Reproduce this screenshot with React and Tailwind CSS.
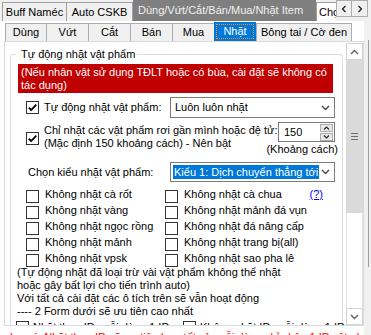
import React from 'react';

const Check = ({ checked }) => (
  <span className="w-[13px] h-[13px] shrink-0 border border-[#333333] bg-white flex items-center justify-center">
    {checked && (
      <svg width="11" height="11" viewBox="0 0 11 11">
        <path d="M1.8 5.6 L4.2 8 L9.3 2.6" stroke="#000" strokeWidth="1.8" fill="none" />
      </svg>
    )}
  </span>
);

const ChevronDown = ({ color = '#555' }) => (
  <svg width="9" height="6" viewBox="0 0 9 6">
    <path d="M1 1 L4.5 4.5 L8 1" stroke={color} strokeWidth="1.4" fill="none" />
  </svg>
);

const ChevronUp = ({ color = '#555' }) => (
  <svg width="9" height="6" viewBox="0 0 9 6">
    <path d="M1 5 L4.5 1.5 L8 5" stroke={color} strokeWidth="1.4" fill="none" />
  </svg>
);

const Item = ({ label }) => (
  <div className="flex items-start gap-[6px]">
    <span className="mt-[2px]">
      <Check />
    </span>
    <span className="whitespace-nowrap">{label}</span>
  </div>
);

const rows = [
  ['Không nhặt cà rốt', 'Không nhặt cà chua'],
  ['Không nhặt vàng', 'Không nhặt mảnh đá vụn'],
  ['Không nhặt ngọc rồng', 'Không nhặt đá nâng cấp'],
  ['Không nhặt mảnh', 'Không nhặt trang bị(all)'],
  ['Không nhặt vpsk', 'Không nhặt sao pha lê'],
];

function TopTabs() {
  return (
    <div className="h-[21px] bg-[#f0f0f0] flex items-end shrink-0">
      <div className="ml-[2px] w-[65px] h-[19px] border border-b-0 border-[#a0a0a0] flex items-center justify-center whitespace-nowrap">
        Buff Naméc
      </div>
      <div className="w-[66px] h-[19px] border border-l-0 border-b-0 border-[#a0a0a0] flex items-center justify-center whitespace-nowrap">
        Auto CSKB
      </div>
      <div className="w-[183px] h-[21px] bg-[#7f7f7f] text-[#f0f0f0] flex items-center pl-[5px] whitespace-nowrap overflow-hidden">
        Dùng/Vứt/Cắt/Bán/Mua/Nhặt Item
      </div>
      <div className="w-[20px] h-[19px] border border-r-0 border-b-0 border-[#a0a0a0] bg-white overflow-hidden flex items-center pl-[2px] whitespace-nowrap">
        Chọn
      </div>
      <div className="self-start flex">
        <div className="w-[16px] h-[17px] border border-[#adadad] bg-[#f0f0f0] flex items-center justify-center">
          <svg width="6" height="8" viewBox="0 0 6 8">
            <path d="M4.5 1 L1.5 4 L4.5 7" stroke="#222" strokeWidth="1.3" fill="none" />
          </svg>
        </div>
        <div className="w-[16px] h-[17px] border border-l-0 border-[#adadad] bg-[#f0f0f0] flex items-center justify-center">
          <svg width="6" height="8" viewBox="0 0 6 8">
            <path d="M1.5 1 L4.5 4 L1.5 7" stroke="#222" strokeWidth="1.3" fill="none" />
          </svg>
        </div>
      </div>
    </div>
  );
}

function InnerTabs() {
  const tab = 'h-[18px] border border-b-0 border-r-0 border-[#adadad] bg-[#f0f0f0] flex items-center justify-center whitespace-nowrap';
  return (
    <div className="h-[20px] flex items-end pl-[5px] shrink-0">
      <div className={`${tab} w-[41px]`}>Dùng</div>
      <div className={`${tab} w-[42px]`}>Vứt</div>
      <div className={`${tab} w-[42px]`}>Cắt</div>
      <div className={`${tab} w-[42px]`}>Bán</div>
      <div className={`${tab} w-[42px]`}>Mua</div>
      <div className="w-[42px] h-[19px] bg-[#0078d7] p-[2px]">
        <div className="h-full border border-dotted border-[#ff8728] text-white flex items-center justify-center">
          Nhặt
        </div>
      </div>
      <div className="w-[96px] h-[18px] border border-b-0 border-[#adadad] bg-[#f0f0f0] flex items-center justify-center whitespace-nowrap">
        Bông tai / Cờ đen
      </div>
    </div>
  );
}

function ScrollBar() {
  return (
    <div className="w-[17px] flex flex-col pt-[1px]">
      <div className="h-[17px] border border-[#d4d4d4] bg-white flex items-center justify-center">
        <ChevronUp color="#606060" />
      </div>
      <div className="h-[153px] bg-[#dadada] flex flex-col items-center justify-center gap-[2px]">
        <span className="w-[7px] h-px bg-[#707070]" />
        <span className="w-[7px] h-px bg-[#707070]" />
        <span className="w-[7px] h-px bg-[#707070]" />
      </div>
      <div className="flex-1 bg-white border-x border-[#e3e3e3]" />
      <div className="h-[17px] border border-[#d4d4d4] bg-white flex items-center justify-center">
        <ChevronDown color="#606060" />
      </div>
    </div>
  );
}

function Page() {
  return (
    <div className="ml-[4px] w-[360px] h-[285px] border border-[#dadada] bg-white flex shrink-0">
      <div className="w-[341px] overflow-hidden pl-[5px] pt-[6px]">
        <fieldset className="w-[333px] min-w-0 border border-[#dcdcdc] rounded-[3px] pb-[10px]">
          <legend className="ml-[5px] pl-[5px] pr-[2px]">Tự động nhặt vật phẩm</legend>

          <div className="mt-[3px] ml-[7px] w-[315px] h-[29px] bg-[#c00000] text-white pl-[3px] pt-[2px] whitespace-nowrap overflow-hidden">
            (Nếu nhân vật sử dụng TĐLT hoặc có bùa, cài đặt sẽ không có
            <br />
            tác dụng)
          </div>

          <div className="mt-[4px] h-[21px] flex items-center justify-between pr-[7px]">
            <div className="ml-[15px] flex items-center gap-[5px]">
              <Check checked />
              <span className="-mt-[1px] whitespace-nowrap">Tự động nhặt vật phẩm:</span>
            </div>
            <div className="w-[165px] h-[21px] border border-[#7a7a7a] bg-white flex items-center justify-between pl-[4px] pr-[4px]">
              <span>Luôn luôn nhặt</span>
              <ChevronDown color="#444" />
            </div>
          </div>

          <div className="mt-[4px] h-[34px] flex pr-[7px]">
            <div className="ml-[15px] w-[252px] shrink-0 flex items-start gap-[5px]">
              <span className="mt-[10px]">
                <Check checked />
              </span>
              <span className="mt-[2px] whitespace-nowrap">
                Chỉ nhặt các vật phẩm rơi gần mình hoặc đệ tử:
                <br />
                (Mặc định 150 khoảng cách) - Nên bật
              </span>
            </div>
            <div className="ml-auto w-[57px] flex flex-col items-end">
              <div className="w-[57px] h-[20px] border border-[#7a7a7a] bg-white flex items-center justify-between pl-[5px] pr-[1px]">
                <span>150</span>
                <div className="flex flex-col gap-px">
                  <span className="w-[13px] h-[8px] border border-[#adadad] bg-[#e8e8e8] flex items-center justify-center">
                    <svg width="7" height="4" viewBox="0 0 7 4"><path d="M1 3.5 L3.5 1 L6 3.5" stroke="#222" strokeWidth="1.1" fill="none" /></svg>
                  </span>
                  <span className="w-[13px] h-[8px] border border-[#adadad] bg-[#e8e8e8] flex items-center justify-center">
                    <svg width="7" height="4" viewBox="0 0 7 4"><path d="M1 0.5 L3.5 3 L6 0.5" stroke="#222" strokeWidth="1.1" fill="none" /></svg>
                  </span>
                </div>
              </div>
              <div className="mt-[1px] -mr-[3px] w-[80px] text-right whitespace-nowrap">(Khoảng cách)</div>
            </div>
          </div>

          <div className="mt-[6px] h-[20px] flex items-center justify-between pr-[7px]">
            <span className="ml-[17px] whitespace-nowrap">Chọn kiểu nhặt vật phẩm:</span>
            <div className="w-[165px] h-[20px] border border-[#7a7a7a] bg-white flex items-center justify-between pl-[2px] pr-[4px]">
              <span className="h-[14px] bg-[#0078d7] text-white px-[1px] flex items-center whitespace-nowrap">
                Kiểu 1: Dịch chuyển thẳng tới
              </span>
              <ChevronDown color="#444" />
            </div>
          </div>

          <div className="mt-[6px] flex flex-col">
            {rows.map(([a, b], i) => (
              <div key={i} className="h-[16px] flex items-start">
                <div className="ml-[15px] w-[139px] shrink-0">
                  <Item label={a} />
                </div>
                <Item label={b} />
                {i === 0 && (
                  <span className="ml-auto mr-[19px] text-[#0000ff] underline">(?)</span>
                )}
              </div>
            ))}
          </div>

          <p className="ml-[6px] -mt-[2px] whitespace-nowrap">
            (Tự động nhặt đã loại trừ vài vật phẩm không thể nhặt
            <br />
            hoặc gây bất lợi cho tiến trình auto)
            <br />
            Với tất cả cài đặt các ô tích trên sẽ vẫn hoạt động
            <br />
            ---- 2 Form dưới sẽ ưu tiên cao nhất
          </p>

          <div className="mt-[3px] flex items-start">
            <div className="ml-[5px] w-[167px] shrink-0 flex items-start gap-[4px]">
              <Check />
              <span className="whitespace-nowrap">Nhặt theo ID, mỗi dòng 1 ID:</span>
            </div>
            <div className="flex items-start gap-[4px]">
              <Check />
              <span className="whitespace-nowrap">Không nhặt ID, mỗi dòng 1 ID:</span>
            </div>
          </div>
        </fieldset>
      </div>
      <ScrollBar />
    </div>
  );
}

export default function App() {
  return (
    <div className="w-[371px] h-[335px] overflow-hidden bg-white flex flex-col text-[11px] leading-[13px] text-black font-['Liberation_Sans',Arial,sans-serif]">
      <TopTabs />
      <div className="flex flex-1 min-h-0">
        <div className="w-[364px] flex flex-col">
          <InnerTabs />
          <Page />
          <p className="mt-[5px] ml-[10px] whitespace-nowrap text-[#ff0000]">
            Lưu ý: Nhặt theo ID sẽ ưu tiên hơn tất cả, mỗi dòng chỉ nhập 1 ID vật phẩm
          </p>
        </div>
        <div className="flex-1 bg-[#f0f0f0] flex">
          <div className="ml-[4px] mt-[19px] w-px h-[227px] bg-[#a0a0a0]" />
        </div>
      </div>
    </div>
  );
}
